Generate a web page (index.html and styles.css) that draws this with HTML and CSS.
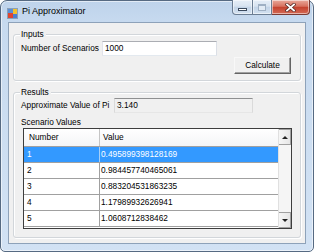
FILE: index.html
```html
<!DOCTYPE html>
<html>
<head>
<meta charset="utf-8">
<title>Pi Approximator</title>
<link rel="stylesheet" href="styles.css">
</head>
<body>
<div class="window">
  <div class="titlebar">
    <svg class="app-icon" width="11" height="11" viewBox="0 0 11 11">
      <rect x="0.5" y="0.5" width="10" height="10" fill="#dfe9f5" stroke="#8aa0b8"/>
      <rect x="1" y="1" width="5" height="4" fill="#5b8fd6"/>
      <rect x="6" y="1" width="4" height="5" fill="#f2c12e"/>
      <rect x="1" y="5" width="5" height="5" fill="#e0452f"/>
      <rect x="6" y="6" width="4" height="4" fill="#4a7fcf"/>
    </svg>
    <span class="title">Pi Approximator</span>
    <div class="caption-buttons">
      <div class="cb cb-min"><span class="glyph-min"></span></div>
      <div class="cb cb-max"><span class="glyph-max"></span></div>
      <div class="cb cb-close">
        <svg width="11" height="9" viewBox="0 0 11 9">
          <path d="M2 1.5 L9 7.5 M9 1.5 L2 7.5" stroke="#5a2a25" stroke-width="3.4" stroke-linecap="square"/>
          <path d="M2 1.5 L9 7.5 M9 1.5 L2 7.5" stroke="#ffffff" stroke-width="1.8" stroke-linecap="square"/>
        </svg>
      </div>
    </div>
  </div>
  <div class="client">
    <div class="group inputs">
      <span class="group-title">Inputs</span>
      <div class="row">
        <span class="lbl lbl-scen">Number of Scenarios</span>
        <div class="textbox tb-scen">1000</div>
      </div>
      <div class="btn-row">
        <div class="btn">Calculate</div>
      </div>
    </div>
    <div class="group results">
      <span class="group-title">Results</span>
      <div class="row">
        <span class="lbl lbl-pi">Approximate Value of Pi</span>
        <div class="textbox textbox-ro tb-pi">3.140</div>
      </div>
      <div class="lbl lbl-values">Scenario Values</div>
      <div class="grid">
        <div class="table">
          <div class="tr th">
            <div class="c1">Number</div>
            <div class="c2">Value</div>
          </div>
          <div class="tr selected">
            <div class="c1">1</div>
            <div class="c2">0.495899398128169</div>
          </div>
          <div class="tr">
            <div class="c1">2</div>
            <div class="c2">0.984457740465061</div>
          </div>
          <div class="tr">
            <div class="c1">3</div>
            <div class="c2">0.883204531863235</div>
          </div>
          <div class="tr">
            <div class="c1">4</div>
            <div class="c2">1.17989932626941</div>
          </div>
          <div class="tr">
            <div class="c1">5</div>
            <div class="c2">1.0608712838462</div>
          </div>
        </div>
        <div class="vscroll">
          <div class="sb-btn"><span class="arrow-up"></span></div>
          <div class="sb-track"></div>
          <div class="sb-btn"><span class="arrow-down"></span></div>
        </div>
      </div>
    </div>
  </div>
</div>
</body>
</html>
```

FILE: styles.css
```css
* { box-sizing: border-box; }
html, body { margin: 0; padding: 0; }
body {
  width: 314px;
  height: 252px;
  overflow: hidden;
  background: #ffffff;
  font-family: "Liberation Sans", Arial, sans-serif;
  font-size: 8.3px;
  color: #000000;
}

.window {
  width: 314px;
  height: 252px;
  border: 1px solid #566a82;
  border-radius: 7px 7px 5px 5px;
  background: linear-gradient(to bottom, #bed3eb 0, #c7daef 22px, #d2e2f4 100%);
  box-shadow: inset 0 0 0 1px rgba(255, 255, 255, 0.55);
  padding: 0 7px 7px;
  display: flex;
  flex-direction: column;
}

/* title bar */
.titlebar {
  height: 21px;
  display: flex;
  align-items: flex-start;
  flex: none;
}
.app-icon { margin: 7px 0 0 -1px; flex: none; }
.title {
  margin: 5px 0 0 4px;
  font-size: 9px;
  line-height: 11px;
  color: #000;
}
.caption-buttons {
  margin: -1px -4px 0 auto;
  display: flex;
  height: 15px;
}
.cb {
  height: 15px;
  border: 1px solid #6b7d93;
  border-top: none;
  border-left: none;
  display: flex;
  align-items: center;
  justify-content: center;
  background: linear-gradient(to bottom, #e6eef8 0, #d7e3f0 45%, #c3d4e8 50%, #d3e1f0 100%);
  box-shadow: inset 0 0 0 1px rgba(255, 255, 255, 0.5);
}
.cb-min {
  width: 21px;
  border-left: 1px solid #6b7d93;
  border-radius: 0 0 0 4px;
}
.cb-max { width: 19px; }
.cb-close {
  width: 38px;
  border-color: #7a3a33;
  border-radius: 0 0 4px 0;
  background: linear-gradient(to bottom, #e9a99c 0, #d7715f 45%, #c5422f 52%, #d36a55 100%);
}
.glyph-min {
  width: 9px;
  height: 3px;
  margin-top: 5px;
  border: 1px solid #3b4a5e;
  background: #ffffff;
}
.glyph-max {
  width: 8px;
  height: 7px;
  border: 1px solid #9fb0c4;
  border-top-width: 2px;
  background: #e2ebf5;
}

/* client area */
.client {
  flex: 1;
  background: #f0f0f0;
  border: 1px solid #8ea2b9;
  padding: 11px 4px 0;
  display: flex;
  flex-direction: column;
}

.group {
  position: relative;
  border: 1px solid #d2d6da;
  border-radius: 3px;
  box-shadow: inset 1px 1px 0 #ffffff, 1px 1px 0 #ffffff;
  flex: none;
}
.group-title {
  position: absolute;
  top: -6px;
  left: 6px;
  padding: 0 2px 0 1px;
  background: #f0f0f0;
  line-height: 11px;
}

.row {
  display: flex;
  align-items: center;
}
.lbl { line-height: 11px; white-space: nowrap; }

.textbox {
  height: 15px;
  background: #ffffff;
  border: 1px solid;
  border-color: #abadb3 #dbdfe6 #e3e9ef #e2e3ea;
  padding: 0 2px;
  line-height: 13px;
}
.textbox-ro {
  background: #f0f0f0;
  border-color: #8f9091 #dadada #e6e6e6 #dadada;
}

/* inputs group */
.inputs {
  height: 47px;
  padding: 6px 9px 0 7px;
}
.lbl-scen { width: 81px; }
.tb-scen { width: 115px; }
.btn-row {
  display: flex;
  justify-content: flex-end;
  margin-top: 1px;
}
.btn {
  width: 57px;
  height: 17px;
  border: 1px solid;
  border-color: #f8f8f8 #646464 #646464 #f8f8f8;
  box-shadow: inset -1px -1px 0 #a0a0a0;
  background: #f0f0f0;
  text-align: center;
  line-height: 15px;
}

/* results group */
.results {
  margin-top: 11px;
  height: 146px;
  padding: 5px 8px 0 7px;
}
.lbl-pi { width: 93px; }
.tb-pi { width: 139px; }
.lbl-values { margin-top: 4px; }

.grid {
  margin-left: 2px;
  width: 269px;
  height: 101px;
  border: 1px solid #3d3d3d;
  background: #ffffff;
  display: flex;
}
.table {
  flex: 1;
  display: flex;
  flex-direction: column;
}
.tr {
  display: flex;
  height: 16px;
  border-bottom: 1px solid #a0a0a0;
  line-height: 15px;
}
.th {
  height: 18px;
  line-height: 17px;
  background: linear-gradient(to bottom, #ffffff 0, #f4f5f7 100%);
  border-bottom-color: #a0a0a0;
}
.c1 {
  width: 76px;
  border-right: 1px solid #a0a0a0;
  padding-left: 3px;
  flex: none;
}
.c2 {
  flex: 1;
  padding-left: 1px;
}
.th .c1 { padding-left: 5px; border-right-color: #c5c5c5; }
.th .c2 { padding-left: 3px; }
.selected {
  background: #3399ff;
  color: #ffffff;
}
.selected .c1 { border-right-color: #a7cff7; }

.vscroll {
  width: 13px;
  flex: none;
  display: flex;
  flex-direction: column;
  background: #f5f5f5;
  border-left: 1px solid #e0e0e0;
}
.sb-btn {
  height: 16px;
  border: 1px solid #a0a0a0;
  border-left: none;
  background: linear-gradient(to right, #f6f6f6, #e6e6e6);
  display: flex;
  align-items: center;
  justify-content: center;
  flex: none;
}
.sb-track { flex: 1; }
.arrow-up {
  width: 0; height: 0;
  border-left: 3px solid transparent;
  border-right: 3px solid transparent;
  border-bottom: 3px solid #222;
}
.arrow-down {
  width: 0; height: 0;
  border-left: 3px solid transparent;
  border-right: 3px solid transparent;
  border-top: 3px solid #222;
}
```
